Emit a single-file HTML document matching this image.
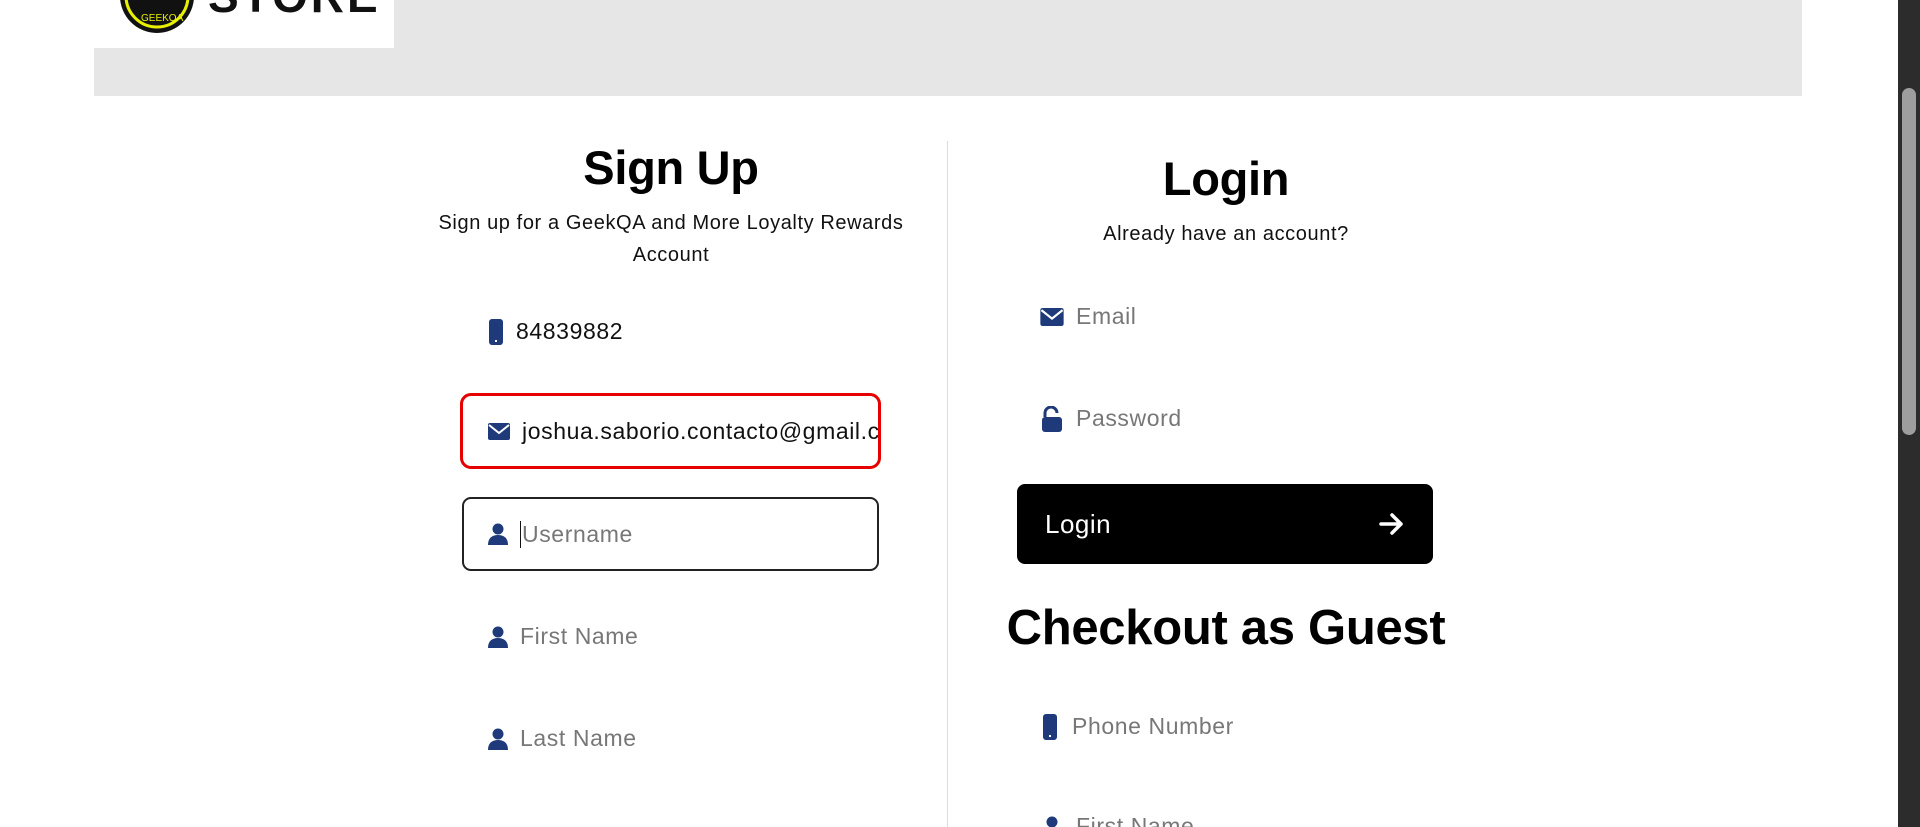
<!DOCTYPE html>
<html><head><meta charset="utf-8"><style>
*{box-sizing:border-box;margin:0;padding:0}
html,body{width:1920px;height:827px;overflow:hidden}
body{background:#fff;font-family:"Liberation Sans",sans-serif;position:relative;color:#111}
.abs{position:absolute}
.hdr{left:94px;top:0;width:1708px;height:96px;background:#e6e6e6}
.logo{left:94px;top:0;width:300px;height:48px;background:#fff;overflow:hidden}
.sb{left:1898px;top:0;width:22px;height:827px;background:#2c2c2c}
.thumb{left:1902px;top:88px;width:14px;height:347px;background:#9e9e9e;border-radius:7px}
.div{left:947px;top:141px;width:1px;height:686px;background:#dcdcdc}
h1{position:absolute;font-weight:bold;color:#000;text-align:center;font-size:47px;letter-spacing:-0.3px}
.sub{position:absolute;text-align:center;font-size:20px;line-height:32px;color:#111;letter-spacing:0.6px}
.row{position:absolute;height:73px;display:flex;align-items:center;font-size:23px;letter-spacing:0.6px;color:#777}
.row svg{margin-right:12px;flex:none}
.val{color:#111}
</style></head><body>
<div class="abs hdr"></div>
<div class="abs logo">
<svg width="300" height="48"><circle cx="63" cy="-4" r="37" fill="#111"/><circle cx="63" cy="-4" r="31" fill="none" stroke="#e8f000" stroke-width="3"/><text x="47" y="21" font-size="10" fill="#e8f000" font-family="Liberation Sans">GEEKQA</text><text x="114" y="12" font-size="46" font-weight="bold" fill="#111" font-family="Liberation Sans" letter-spacing="3">STORE</text></svg>
</div>
<div class="abs sb"></div><div class="abs thumb"></div>
<div class="abs div"></div>

<h1 style="left:471px;width:400px;top:140px">Sign Up</h1>
<div class="sub" style="left:370px;width:602px;top:207px">Sign up for a GeekQA and More Loyalty Rewards<br>Account</div>

<div class="row" style="left:462px;top:295px;width:417px;padding-left:26px"><svg width="16" height="26" viewBox="0 0 16 26"><rect x="1" y="0" width="14" height="26" rx="3" fill="#1e3a7a"/><rect x="7" y="21" width="2" height="2" fill="#fff"/></svg><span class="val">84839882</span></div>
<div class="row" style="left:460px;top:393px;width:421px;height:76px;border:3px solid #e60000;border-radius:11px;padding-left:25px;overflow:hidden;white-space:nowrap"><svg width="22" height="17" viewBox="0 0 22 17"><rect width="22" height="17" rx="2" fill="#1e3a7a"/><path d="M1 2l10 8 10-8" stroke="#fff" stroke-width="2" fill="none"/></svg><span class="val">joshua.saborio.contacto@gmail.com</span></div>
<div class="row" style="left:462px;top:497px;width:417px;height:74px;border:2px solid #222;border-radius:9px;padding-left:24px"><svg width="20" height="22" viewBox="0 0 20 22"><circle cx="10" cy="6" r="5.5" fill="#1e3a7a"/><path d="M0 22c0-7 4-10 10-10s10 3 10 10z" fill="#1e3a7a"/></svg><span style="border-left:1.5px solid #111;padding-left:1px">Username</span></div>
<div class="row" style="left:462px;top:600px;width:417px;padding-left:26px"><svg width="20" height="22" viewBox="0 0 20 22"><circle cx="10" cy="6" r="5.5" fill="#1e3a7a"/><path d="M0 22c0-7 4-10 10-10s10 3 10 10z" fill="#1e3a7a"/></svg>First Name</div>
<div class="row" style="left:462px;top:702px;width:417px;padding-left:26px"><svg width="20" height="22" viewBox="0 0 20 22"><circle cx="10" cy="6" r="5.5" fill="#1e3a7a"/><path d="M0 22c0-7 4-10 10-10s10 3 10 10z" fill="#1e3a7a"/></svg>Last Name</div>

<h1 style="left:1026px;width:400px;top:151px">Login</h1>
<div class="sub" style="left:1026px;width:400px;top:218px">Already have an account?</div>
<div class="row" style="left:1040px;top:280px;width:400px"><svg width="24" height="18" viewBox="0 0 22 17"><rect width="22" height="17" rx="2" fill="#1e3a7a"/><path d="M1 2l10 8 10-8" stroke="#fff" stroke-width="2" fill="none"/></svg>Email</div>
<div class="row" style="left:1040px;top:382px;width:400px"><svg width="24" height="26" viewBox="0 0 24 26"><path d="M5 11V7a6 6 0 0 1 12 0" stroke="#1e3a7a" stroke-width="3" fill="none"/><rect x="2" y="11" width="20" height="15" rx="3" fill="#1e3a7a"/></svg>Password</div>
<div class="abs" style="left:1017px;top:484px;width:416px;height:80px;background:#000;border-radius:8px;color:#fff;font-size:26px;letter-spacing:0.5px;display:flex;align-items:center;justify-content:space-between;padding:0 28px">Login<svg width="26" height="22" viewBox="0 0 26 22"><path d="M2 11h20M13 2l9 9-9 9" stroke="#fff" stroke-width="3.5" fill="none" stroke-linecap="round" stroke-linejoin="round"/></svg></div>
<h1 style="left:976px;width:500px;top:600px;font-size:49px">Checkout as Guest</h1>
<div class="row" style="left:1040px;top:690px;width:400px"><svg width="20" height="26" viewBox="0 0 16 26"><rect x="1" y="0" width="14" height="26" rx="3" fill="#1e3a7a"/><rect x="7" y="21" width="2" height="2" fill="#fff"/></svg>Phone Number</div>
<div class="row" style="left:1040px;top:790px;width:400px"><svg width="24" height="22" viewBox="0 0 20 22"><circle cx="10" cy="6" r="5.5" fill="#1e3a7a"/><path d="M0 22c0-7 4-10 10-10s10 3 10 10z" fill="#1e3a7a"/></svg>First Name</div>
</body></html>
